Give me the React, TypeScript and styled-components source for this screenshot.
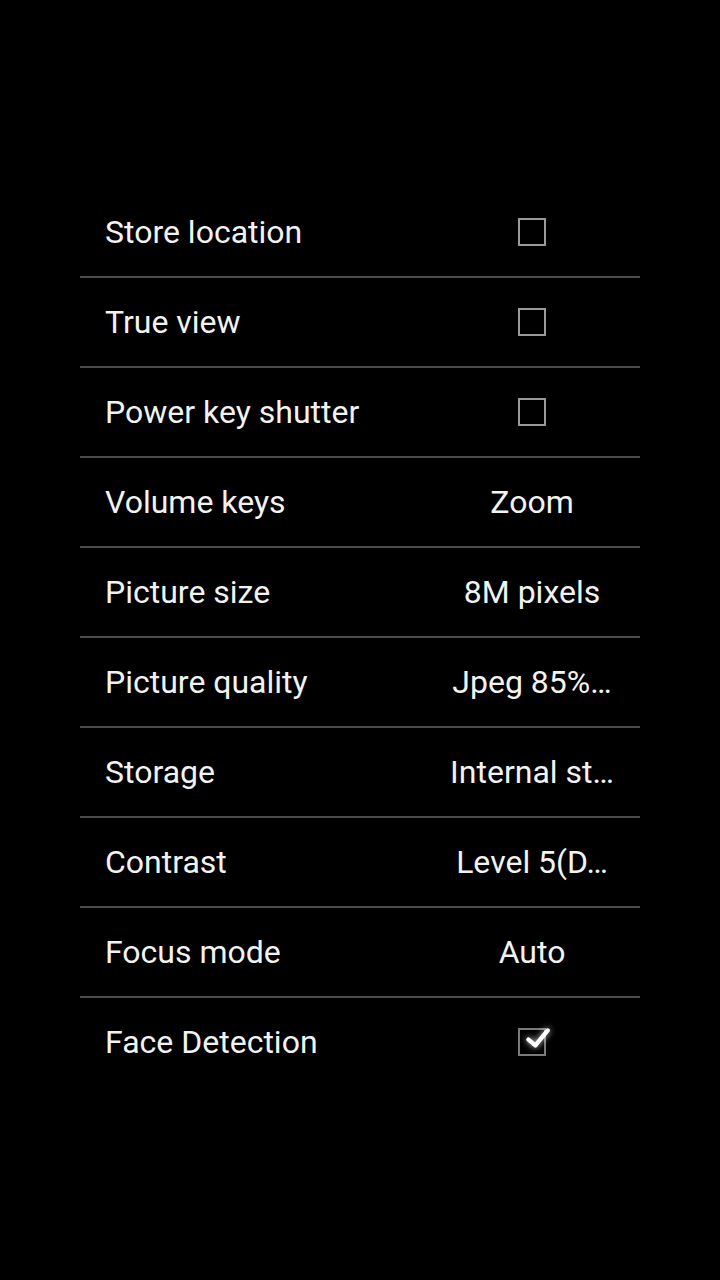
import React from 'react';
import styled, { createGlobalStyle } from 'styled-components';

type Setting =
  | { label: string; kind: 'check'; checked: boolean }
  | { label: string; kind: 'value'; value: string };

// values are shown as the device truncates them
const SETTINGS: Setting[] = [
  { label: 'Store location', kind: 'check', checked: false },
  { label: 'True view', kind: 'check', checked: false },
  { label: 'Power key shutter', kind: 'check', checked: false },
  { label: 'Volume keys', kind: 'value', value: 'Zoom' },
  { label: 'Picture size', kind: 'value', value: '8M pixels' },
  { label: 'Picture quality', kind: 'value', value: 'Jpeg 85%…' },
  { label: 'Storage', kind: 'value', value: 'Internal st…' },
  { label: 'Contrast', kind: 'value', value: 'Level 5(D…' },
  { label: 'Focus mode', kind: 'value', value: 'Auto' },
  { label: 'Face Detection', kind: 'check', checked: true },
];

function App(): JSX.Element {
  return (
    <>
      <GlobalStyle />
      <Screen>
        <List>
          {SETTINGS.map((item) => (
            <Row key={item.label}>
              <Label>{item.label}</Label>
              <ValueCell>
                {item.kind === 'check' ? (
                  <CheckBox $checked={item.checked}>
                    {item.checked && (
                      <CheckMark viewBox="0 0 28 28">
                        <path d="M6 14.5 L12.5 20 L24 6" />
                      </CheckMark>
                    )}
                  </CheckBox>
                ) : (
                  <ValueText>{item.value}</ValueText>
                )}
              </ValueCell>
            </Row>
          ))}
        </List>
      </Screen>
    </>
  );
}

export default App;

const GlobalStyle = createGlobalStyle`
  html, body {
    margin: 0;
    padding: 0;
    background: #000;
  }
`;

const Screen = styled.main`
  width: 720px;
  height: 1280px;
  background: #000;
  padding: 188px 80px 0;
  box-sizing: border-box;
  font-family: Roboto, 'Noto Sans', sans-serif;
`;

const List = styled.div`
  display: flex;
  flex-direction: column;
`;

const Row = styled.div`
  display: flex;
  align-items: center;
  height: 88px;
  border-bottom: 2px solid #4a4a4a;

  &:last-child {
    border-bottom: none;
  }
`;

const Label = styled.span`
  flex: 1;
  padding-left: 25px;
  color: #f2f2f2;
  font-size: 32px;
`;

const ValueCell = styled.div`
  width: 190px;
  margin-right: 13px;
  display: flex;
  justify-content: center;
  align-items: center;
`;

const ValueText = styled.span`
  white-space: nowrap;
  color: #f2f2f2;
  font-size: 32px;
`;

const CheckBox = styled.div<{ $checked: boolean }>`
  position: relative;
  width: 28px;
  height: 28px;
  box-sizing: border-box;
  border: 2px solid ${(p) => (p.$checked ? '#7a7a7a' : '#9a9a9a')};
`;

const CheckMark = styled.svg`
  position: absolute;
  left: 2px;
  top: -6px;
  width: 30px;
  height: 30px;
  overflow: visible;
  filter: drop-shadow(0 0 3px rgba(255, 255, 255, 0.8));

  path {
    fill: none;
    stroke: #fff;
    stroke-width: 4;
    stroke-linecap: round;
    stroke-linejoin: round;
  }
`;
